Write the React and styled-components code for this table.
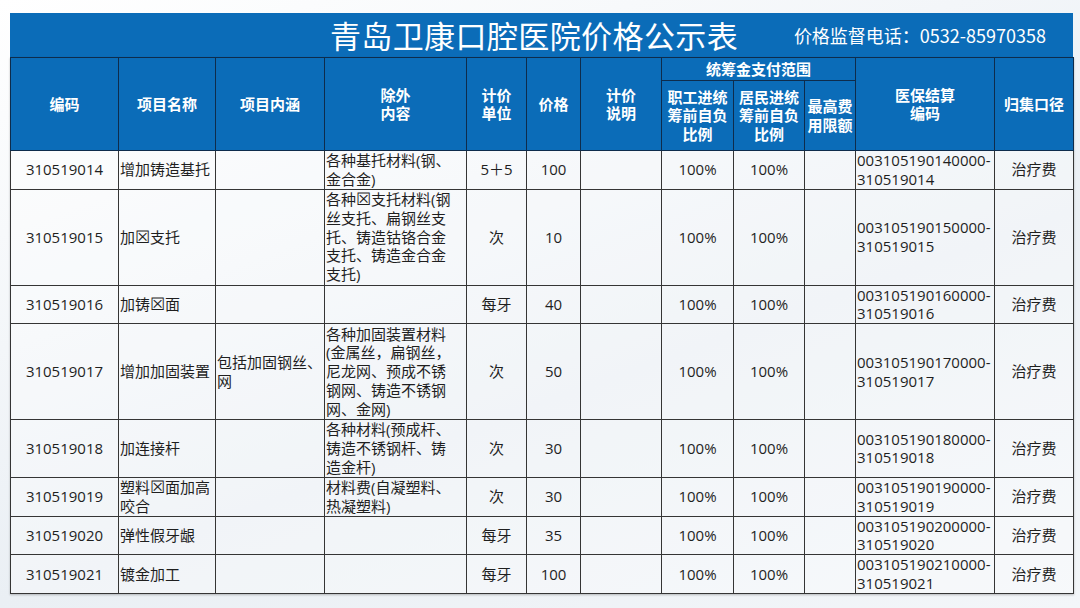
import styled, { createGlobalStyle } from "styled-components";

const GlobalStyle = createGlobalStyle`
  html, body {
    margin: 0;
    padding: 0;
  }
  body {
    width: 1080px;
    height: 608px;
    overflow: hidden;
    background: linear-gradient(160deg, #ffffff 0%, #f3f6f9 35%, #eaeff4 60%, #f3f6f9 100%);
    font-family: "Open Sans", "Noto Sans CJK SC", sans-serif;
    color: #1f1f1f;
  }
`;

const BLUE = "#0b6cb8";

const columns = [108, 97, 109, 142, 60, 54, 81, 72, 71, 51, 139, 79];

const rows = [
  { code: "310519014", name: ["增加铸造基托"], inner: [], excl: ["各种基托材料(钢、", "金合金)"], unit: "5＋5", price: "100", h: 38 },
  { code: "310519015", name: ["加", "☒", "支托"], inner: [], excl: ["各种☒支托材料(钢", "丝支托、扁钢丝支", "托、铸造钴铬合金", "支托、铸造金合金", "支托)"], unit: "次", price: "10", h: 96 },
  { code: "310519016", name: ["加铸", "☒", "面"], inner: [], excl: [], unit: "每牙", price: "40", h: 38 },
  { code: "310519017", name: ["增加加固装置"], inner: ["包括加固钢丝、", "网"], excl: ["各种加固装置材料", "(金属丝，扁钢丝，", "尼龙网、预成不锈", "钢网、铸造不锈钢", "网、金网)"], unit: "次", price: "50", h: 96 },
  { code: "310519018", name: ["加连接杆"], inner: [], excl: ["各种材料(预成杆、", "铸造不锈钢杆、铸", "造金杆)"], unit: "次", price: "30", h: 57 },
  { code: "310519019", name: ["塑料", "☒", "面加高", "\n", "咬合"], inner: [], excl: ["材料费(自凝塑料、", "热凝塑料)"], unit: "次", price: "30", h: 39 },
  { code: "310519020", name: ["弹性假牙龈"], inner: [], excl: [], unit: "每牙", price: "35", h: 38 },
  { code: "310519021", name: ["镀金加工"], inner: [], excl: [], unit: "每牙", price: "100", h: 39 },
];

function Lines({ items }) {
  return items.map((line, i) => (
    <span key={i}>
      {i > 0 && <br />}
      {renderTofu(line)}
    </span>
  ));
}

function renderTofu(text) {
  return text.split("☒").map((part, i) => (
    <span key={i}>
      {i > 0 && <Tofu>☒</Tofu>}
      {part}
    </span>
  ));
}

function Name({ parts }) {
  return parts.map((p, i) =>
    p === "☒" ? <Tofu key={i}>☒</Tofu> : p === "\n" ? <br key={i} /> : <span key={i}>{p}</span>
  );
}

export default function App() {
  return (
    <>
      <GlobalStyle />
      <Page>
        <TitleBar>
          <span />
          <Title>青岛卫康口腔医院价格公示表</Title>
          <Phone>价格监督电话：0532-85970358</Phone>
        </TitleBar>
        <Table>
          <colgroup>
            {columns.map((w, i) => (
              <col key={i} style={{ width: w }} />
            ))}
          </colgroup>
          <thead>
            <HeadRow $h={23}>
              <Th rowSpan={2}>编码</Th>
              <Th rowSpan={2}>项目名称</Th>
              <Th rowSpan={2}>项目内涵</Th>
              <Th rowSpan={2}>除外<br />内容</Th>
              <Th rowSpan={2}>计价<br />单位</Th>
              <Th rowSpan={2}>价格</Th>
              <Th rowSpan={2}>计价<br />说明</Th>
              <Th colSpan={3}>统筹金支付范围</Th>
              <Th rowSpan={2}>医保结算<br />编码</Th>
              <Th rowSpan={2}>归集口径</Th>
            </HeadRow>
            <HeadRow $h={70}>
              <Th>职工进统<br />筹前自负<br />比例</Th>
              <Th>居民进统<br />筹前自负<br />比例</Th>
              <Th>最高费<br />用限额</Th>
            </HeadRow>
          </thead>
          <tbody>
            {rows.map((r) => (
              <Row key={r.code} $h={r.h}>
                <Td>{r.code}</Td>
                <Td $left><Name parts={r.name} /></Td>
                <Td $left><Lines items={r.inner} /></Td>
                <Td $left><Lines items={r.excl} /></Td>
                <Td>{r.unit}</Td>
                <Td>{r.price}</Td>
                <Td />
                <Td>100%</Td>
                <Td>100%</Td>
                <Td />
                <Td $left>
                  {"0031051900000".slice(0, 9) + r.code.slice(7) + "0000-"}
                  <br />
                  {r.code}
                </Td>
                <Td>治疗费</Td>
              </Row>
            ))}
          </tbody>
        </Table>
      </Page>
    </>
  );
}

const Page = styled.div`
  padding: 13px 0 0 10px;
  width: 1063px;
`;

const TitleBar = styled.div`
  display: grid;
  grid-template-columns: 1fr auto 1fr;
  align-items: center;
  height: 44px;
  background: ${BLUE};
  color: #ffffff;
  font-family: "Noto Sans CJK SC", sans-serif;
`;

const Title = styled.div`
  font-size: 31px;
  line-height: 44px;
  letter-spacing: 0.4px;
  margin-right: 15px;
`;

const Phone = styled.div`
  justify-self: end;
  padding-right: 27px;
  font-size: 18px;
  line-height: 44px;
`;

const Table = styled.table`
  width: 1063px;
  table-layout: fixed;
  border-collapse: collapse;
  box-shadow: 0 1px 2px rgba(0, 0, 0, 0.25);
`;

const HeadRow = styled.tr`
  height: ${(p) => p.$h}px;
`;

const Th = styled.th`
  background: ${BLUE};
  color: #ffffff;
  border: 1px solid #0e2c4c;
  font-family: "Noto Sans CJK SC", sans-serif;
  font-size: 15px;
  font-weight: 700;
  line-height: 18.5px;
  padding: 0;
  text-align: center;
  vertical-align: middle;
`;

const Row = styled.tr`
  height: ${(p) => p.$h}px;
`;

const Td = styled.td`
  border: 1px solid #353535;
  background: rgba(255, 255, 255, 0.35);
  font-size: 15px;
  line-height: 18.8px;
  padding: 0 ${(p) => (p.$left ? "1px" : "0")};
  text-align: ${(p) => (p.$left ? "left" : "center")};
  vertical-align: middle;
  white-space: nowrap;
  overflow: hidden;
`;

const Tofu = styled.span`
  font-family: "DejaVu Sans", sans-serif;
  font-size: 17px;
  font-weight: 300;
`;
